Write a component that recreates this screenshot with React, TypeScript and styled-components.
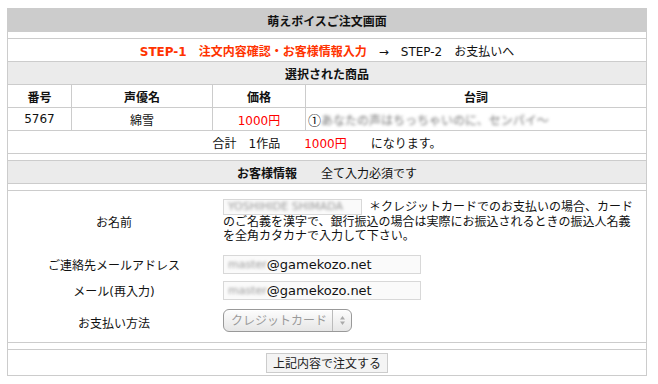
import React from "react";
import styled, { createGlobalStyle } from "styled-components";

const GlobalStyle = createGlobalStyle`
  html, body {
    margin: 0;
    padding: 0;
    background: #fff;
  }
  body {
    font-family: "DejaVu Sans", "Noto Sans CJK JP", sans-serif;
    font-size: 12px;
    color: #111;
  }
`;

const Page = styled.div`
  padding: 8px 0 0 7px;
  width: 640px;
`;

const Frame = styled.div`
  border: 1px solid #ccc;
  display: flex;
  flex-direction: column;
`;

const Title = styled.div`
  height: 23px;
  background: #ccc;
  display: flex;
  align-items: center;
  justify-content: center;
  font-weight: bold;
`;

const Gap = styled.div`
  height: 6px;
  border-bottom: 1px solid #ccc;
`;

const Row = styled.div<{ $bg?: string; $h?: number }>`
  height: ${(p) => p.$h ?? 22}px;
  background: ${(p) => p.$bg ?? "#fff"};
  border-bottom: 1px solid #ccc;
  display: flex;
  align-items: center;
  justify-content: center;
  white-space: pre;
`;

const Strong = styled.span`
  font-weight: bold;
`;

const Red = styled.span<{ $bold?: boolean }>`
  color: ${(p) => (p.$bold ? "#ff3300" : "#ff0000")};
  font-weight: ${(p) => (p.$bold ? "bold" : "normal")};
`;

const Table = styled.div`
  display: grid;
  grid-template-columns: 64px 141px 93px 1fr;
`;

const Cell = styled.div<{ $head?: boolean; $last?: boolean; $left?: boolean }>`
  height: 22px;
  border-bottom: 1px solid #ccc;
  border-right: ${(p) => (p.$last ? "none" : "1px solid #ccc")};
  display: flex;
  align-items: center;
  justify-content: ${(p) => (p.$left ? "flex-start" : "center")};
  padding-left: ${(p) => (p.$left ? "2px" : "0")};
  font-weight: ${(p) => (p.$head ? "bold" : "normal")};
  white-space: pre;
  overflow: hidden;
`;

const Circled = styled.span`
  font-family: "Noto Sans CJK JP", sans-serif;
  font-size: 13px;
`;

const Blur = styled.span<{ $color?: string; $amount?: number; $size?: number }>`
  color: ${(p) => p.$color ?? "#777"};
  filter: blur(${(p) => p.$amount ?? 1.6}px);
  font-size: ${(p) => (p.$size ? `${p.$size}px` : "inherit")};
`;

const Form = styled.div`
  display: grid;
  grid-template-columns: 212px 1fr;
  border-bottom: 1px solid #ccc;
  padding-bottom: 1px;
`;

const Label = styled.div`
  display: flex;
  align-items: center;
  justify-content: center;
  white-space: pre;
`;

const Value = styled.div<{ $pad: string }>`
  padding: ${(p) => p.$pad};
  line-height: 14px;
`;

const FieldBox = styled.span<{ $w: number; $h: number }>`
  display: inline-flex;
  align-items: center;
  box-sizing: border-box;
  width: ${(p) => p.$w}px;
  height: ${(p) => p.$h}px;
  border: 1px solid #d8d8d8;
  background: #fafafa;
  padding-left: 4px;
  vertical-align: middle;
  overflow: hidden;
  font-size: 13px;
  color: #111;
  white-space: nowrap;
`;

const Note = styled.span`
  margin-left: 7px;
`;

const Select = styled.div`
  box-sizing: border-box;
  width: 129px;
  height: 23px;
  border: 1px solid #999;
  border-radius: 6px;
  background: linear-gradient(#fdfdfd, #e6e6e6);
  display: flex;
  align-items: center;
  color: #9a9a9a;
  font-size: 12px;
  box-shadow: inset 0 1px 0 #fff;
  white-space: nowrap;
`;

const SelectText = styled.span`
  flex: 1;
  padding-left: 7px;
`;

const SelectArrows = styled.span`
  width: 18px;
  height: 21px;
  border-left: 1px solid #bbb;
  display: flex;
  align-items: center;
  justify-content: center;
`;

const ButtonRow = styled.div`
  height: 25px;
  display: flex;
  justify-content: center;
  align-items: flex-start;
  padding-top: 3px;
  box-sizing: border-box;
`;

const Button = styled.button`
  height: 20px;
  padding: 0 6px;
  border: 1px solid #ccc;
  background: #f4f4f4;
  font-family: "Noto Sans CJK JP", sans-serif;
  font-size: 12px;
  color: #222;
  line-height: 18px;
  border-radius: 0;
`;

export default function App() {
  return (
    <>
      <GlobalStyle />
      <Page>
        <Frame>
          <Title>萌えボイスご注文画面</Title>
          <Gap />
          <Row>
            <Red $bold>STEP-1　注文内容確認・お客様情報入力</Red>
            {"　→　STEP-2　お支払いへ"}
          </Row>
          <Row $bg="#ebebeb">
            <Strong>選択された商品</Strong>
          </Row>
          <Table>
            <Cell $head>番号</Cell>
            <Cell $head>声優名</Cell>
            <Cell $head>価格</Cell>
            <Cell $head $last>
              台詞
            </Cell>
            <Cell>5767</Cell>
            <Cell>綿雪</Cell>
            <Cell>
              <Red>1000円</Red>
            </Cell>
            <Cell $last $left>
              <Circled>①</Circled>
              <Blur $color="#777" $amount={1.8}>あなたの声はちっちゃいのに、センパイ〜</Blur>
            </Cell>
          </Table>
          <Row>
            {"合計　1作品　　"}
            <Red>1000円</Red>
            {"　　になります。"}
          </Row>
          <Gap />
          <Row $bg="#ebebeb">
            <Strong>お客様情報</Strong>
            {"　　全て入力必須です"}
          </Row>
          <Gap />
          <Form>
            <Label>お名前</Label>
            <Value $pad="8px 0 9px 3px">
              <FieldBox $w={139} $h={16}>
                <Blur $color="#999" $amount={1.5} $size={11}>
                  YOSHIHIDE SHIMADA
                </Blur>
              </FieldBox>
              <Note>＊クレジットカードでのお支払いの場合、カード</Note>
              <br />
              のご名義を漢字で、銀行振込の場合は実際にお振込されるときの振込人名義
              <br />
              を全角カタカナで入力して下さい。
            </Value>

            <Label>ご連絡先メールアドレス</Label>
            <Value $pad="3px 0 3px 3px">
              <FieldBox $w={198} $h={19}>
                <Blur $color="#999" $size={11}>master</Blur>@gamekozo.net
              </FieldBox>
            </Value>

            <Label>メール(再入力)</Label>
            <Value $pad="4px 0 3px 3px">
              <FieldBox $w={198} $h={19}>
                <Blur $color="#999" $size={11}>master</Blur>@gamekozo.net
              </FieldBox>
            </Value>

            <Label>お支払い方法</Label>
            <Value $pad="6px 0 9px 3px">
              <Select>
                <SelectText>クレジットカード</SelectText>
                <SelectArrows>
                  <svg width="7" height="11" viewBox="0 0 7 11">
                    <path d="M3.5 1 L6 4.5 L1 4.5 Z" fill="#aaa" />
                    <path d="M3.5 10 L6 6.5 L1 6.5 Z" fill="#aaa" />
                  </svg>
                </SelectArrows>
              </Select>
            </Value>
          </Form>
          <Gap />
          <ButtonRow>
            <Button>上記内容で注文する</Button>
          </ButtonRow>
        </Frame>
      </Page>
    </>
  );
}
